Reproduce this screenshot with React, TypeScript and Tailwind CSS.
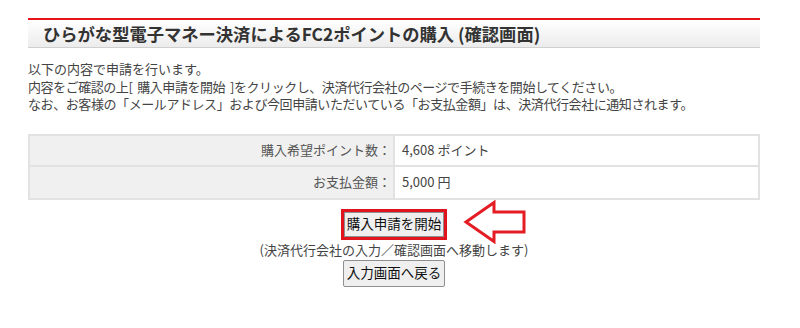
import React from "react";

export default function App() {
  const font = { fontFamily: '"Noto Sans CJK JP", "Noto Sans", sans-serif' };
  return (
    <div className="w-[800px] h-[328px] bg-white text-[#333] overflow-hidden" style={font}>
      <div className="ml-[28px] w-[732px] pt-[18px]">
        <div className="border-t-2 border-[#e8141c] border-b border-b-[#cfcfcf] h-[30px] bg-gradient-to-b from-white to-[#ececec] flex items-center pl-[15px]">
          <h1 className="text-[17.3px] font-bold leading-none text-[#333]">
            ひらがな型電子マネー決済によるFC2ポイントの購入 (確認画面)
          </h1>
        </div>
        <div className="mt-[12px] text-[13px] leading-[17.5px] text-[#444]">
          <p>以下の内容で申請を行います。</p>
          <p className="tracking-[-0.45px]">内容をご確認の上[&nbsp;&nbsp;購入申請を開始&nbsp;&nbsp;]をクリックし、決済代行会社のページで手続きを開始してください。</p>
          <p className="tracking-[-0.42px]">なお、お客様の「メールアドレス」および今回申請いただいている「お支払金額」は、決済代行会社に通知されます。</p>
        </div>
        <div className="mt-[21px] border-2 border-[#e2e2e2] text-[13px]">
          <div className="flex h-[31px] border-b-2 border-[#e2e2e2]">
            <div className="w-[365px] bg-[#f0f0f0] border-r-2 border-[#e2e2e2] flex items-center justify-end pr-[2px] text-[#555]">
              購入希望ポイント数：
            </div>
            <div className="flex-1 flex items-center pl-[7px] text-[#444]">4,608 ポイント</div>
          </div>
          <div className="flex h-[31px]">
            <div className="w-[365px] bg-[#f0f0f0] border-r-2 border-[#e2e2e2] flex items-center justify-end pr-[2px] text-[#555]">
              お支払金額：
            </div>
            <div className="flex-1 flex items-center pl-[7px] text-[#444]">5,000 円</div>
          </div>
        </div>
        <div className="flex flex-col items-center mt-[9px]">
          <div className="relative">
            <div className="border-[3px] border-[#e0141e]">
              <button className="h-[25px] px-[2px] bg-[#efefef] border border-[#8f8f8f] text-[13.5px] text-[#111] leading-none flex items-center">
                購入申請を開始
              </button>
            </div>
            <svg className="absolute left-[calc(100%+16px)] top-[-9px]" width="64" height="44" viewBox="0 0 64 44">
              <path d="M3 22 L31 2.5 L31 12 L61 12 L61 32 L31 32 L31 41.5 Z" fill="white" stroke="#e41c24" strokeWidth="3" strokeLinejoin="miter" />
            </svg>
          </div>
          <p className="text-[13px] leading-[17px] text-[#444] mt-[1px]">(決済代行会社の入力／確認画面へ移動します)</p>
          <button className="mt-[2px] h-[27px] px-[3px] bg-[#efefef] border border-[#8f8f8f] rounded-[2px] text-[13.5px] text-[#111] leading-none">
            入力画面へ戻る
          </button>
        </div>
      </div>
    </div>
  );
}
